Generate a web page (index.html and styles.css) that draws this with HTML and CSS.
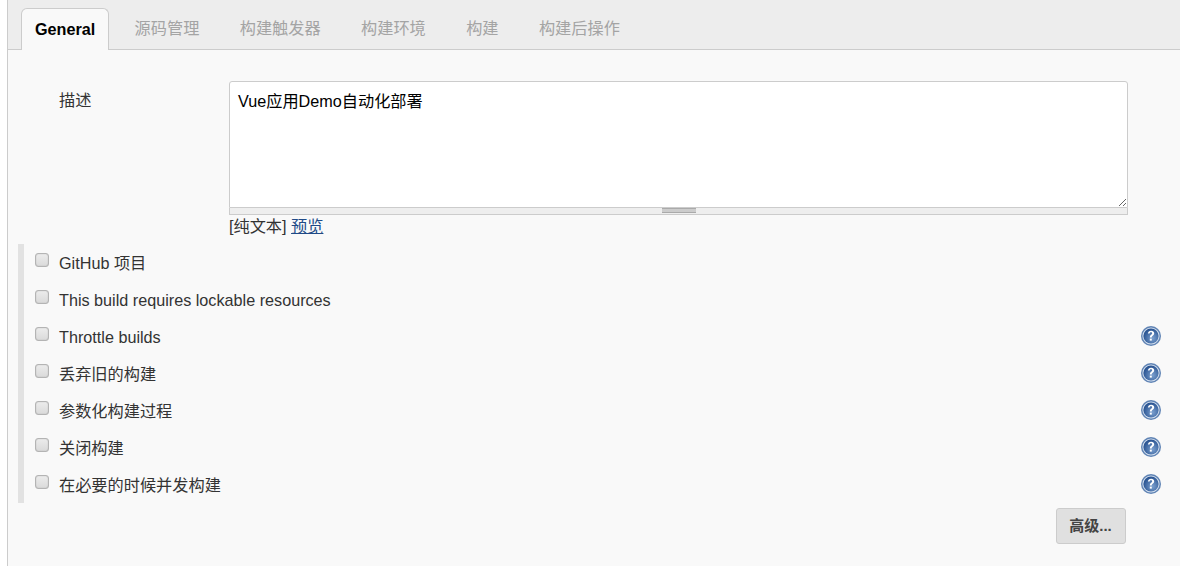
FILE: index.html
```html
<!DOCTYPE html>
<html lang="zh">
<head>
<meta charset="utf-8">
<title>General</title>
<link rel="stylesheet" href="styles.css">
</head>
<body>
<svg class="defs" width="0" height="0" aria-hidden="true">
  <defs>
    <radialGradient id="helpfill" cx="0.6" cy="0.65" r="0.7">
      <stop offset="0" stop-color="#7ba0cf"/>
      <stop offset="1" stop-color="#1f4a8a"/>
    </radialGradient>
    <symbol id="help" viewBox="0 0 22 22">
      <circle cx="11" cy="11" r="10" fill="#5f83b4"/>
      <circle cx="11" cy="11" r="8.6" fill="#d3dfee"/>
      <circle cx="11" cy="11" r="7.6" fill="url(#helpfill)"/>
      <path d="M7.9 8.6c.1-1.9 1.4-2.9 3.2-2.9 1.9 0 3.1 1 3.1 2.6 0 1.2-.7 1.8-1.5 2.4-.7.5-1 .9-1 1.7h-1.8c0-1.3.4-2 1.3-2.7.7-.5 1-.8 1-1.4 0-.7-.5-1.1-1.2-1.1-.8 0-1.3.5-1.4 1.4z" fill="#fff"/>
      <rect x="9.8" y="13.6" width="2" height="2" fill="#fff"/>
    </symbol>
  </defs>
</svg>
<div class="page">
  <nav class="tabbar">
    <a class="tab active">General</a>
    <a class="tab">源码管理</a>
    <a class="tab">构建触发器</a>
    <a class="tab">构建环境</a>
    <a class="tab">构建</a>
    <a class="tab">构建后操作</a>
  </nav>
  <div class="desc">
    <label class="desc-label">描述</label>
    <div class="desc-field">
      <textarea class="desc-input" spellcheck="false">Vue应用Demo自动化部署</textarea>
      <div class="grippy"><span class="grip"></span></div>
      <div class="format">[纯文本] <a class="link">预览</a></div>
    </div>
  </div>
  <div class="options">
    <div class="option"><input class="check" type="checkbox"><span class="option-label">GitHub 项目</span></div>
    <div class="option"><input class="check" type="checkbox"><span class="option-label">This build requires lockable resources</span></div>
    <div class="option"><input class="check" type="checkbox"><span class="option-label">Throttle builds</span><svg class="help"><use href="#help"/></svg></div>
    <div class="option"><input class="check" type="checkbox"><span class="option-label">丢弃旧的构建</span><svg class="help"><use href="#help"/></svg></div>
    <div class="option"><input class="check" type="checkbox"><span class="option-label">参数化构建过程</span><svg class="help"><use href="#help"/></svg></div>
    <div class="option"><input class="check" type="checkbox"><span class="option-label">关闭构建</span><svg class="help"><use href="#help"/></svg></div>
    <div class="option"><input class="check" type="checkbox"><span class="option-label">在必要的时候并发构建</span><svg class="help"><use href="#help"/></svg></div>
  </div>
  <div class="actions"><button class="advanced" type="button">高级...</button></div>
</div>
</body>
</html>
```

FILE: styles.css
```css
* { box-sizing: border-box; }
html, body { margin: 0; height: 566px; overflow: hidden; background: #fff; }
body {
  font-family: "Liberation Sans", "Noto Sans CJK SC", sans-serif;
  font-size: 16.2px;
  color: #333;
}
.defs { display: block; height: 0; }
.page {
  margin-left: 7px;
  height: 566px;
  border-left: 1px solid #ccc;
  background: #f9f9f9;
  display: flex;
  flex-direction: column;
}
.tabbar {
  height: 50px;
  flex: none;
  display: flex;
  align-items: flex-end;
  padding-left: 13px;
  background: #ededed;
  border-bottom: 1px solid #ccc;
}
.tab {
  height: 42px;
  margin-bottom: -1px;
  padding: 10px 20.2px 0;
  line-height: 20px;
  color: #a4a4a4;
}
.active {
  width: 88px;
  padding: 10px 0 0 13px;
  margin-right: 5.4px;
  color: #000;
  font-weight: bold;
  background: #f9f9f9;
  border: 1px solid #ccc;
  border-bottom: 0;
  border-radius: 6px 6px 0 0;
}
.desc {
  display: flex;
  padding-top: 31px;
  padding-left: 51px;
}
.desc-label {
  width: 170px;
  flex: none;
  padding-top: 9px;
  line-height: 20px;
}
.desc-field {
  width: 899px;
  flex: none;
}
.desc-input {
  display: block;
  width: 899px;
  height: 127px;
  padding: 8px;
  margin: 0;
  font: inherit;
  line-height: 22px;
  color: #000;
  background: #fff;
  border: 1px solid #ccc;
  border-radius: 3px 3px 0 0;
  outline: 0;
  resize: vertical;
}
.grippy {
  height: 7px;
  display: flex;
  justify-content: center;
  background: #eee;
  border: 1px solid #ccc;
  border-top: 0;
}
.grip {
  width: 34px;
  height: 5px;
  border-top: 1px solid #aaa;
  border-bottom: 1px solid #aaa;
  background: #ccc;
}
.format {
  height: 23px;
  line-height: 22px;
}
.link { color: #204a87; text-decoration: underline; }
.options {
  margin: 6px 0 0 10px;
  width: 1145px;
  border-left: 6px solid #e2e2e2;
  height: 259px;
  flex: none;
}
.option {
  height: 37px;
  display: flex;
  align-items: center;
  position: relative;
}
.check {
  appearance: none;
  width: 14px;
  height: 14px;
  margin: -5px 0 0 11px;
  flex: none;
  background: linear-gradient(#ececec, #dadada);
  border: 1px solid #b4b4b4;
  border-radius: 3px;
  box-shadow: inset 0 0 1px #999;
}
.option-label {
  margin-left: 10px;
  flex: 1;
  line-height: 22px;
}
.help {
  width: 22px;
  height: 22px;
  flex: none;
  margin: -2px 1px 0 0;
}
.actions {
  display: flex;
  justify-content: flex-end;
  padding: 5px 54px 0 0;
}
.advanced {
  width: 70px;
  height: 36px;
  padding: 0 1px 3px 0;
  font: bold 15px "Liberation Sans", "Noto Sans CJK SC", sans-serif;
  color: #444;
  background: #e0e0e0;
  border: 1px solid #ccc;
  border-radius: 3px;
}
```
